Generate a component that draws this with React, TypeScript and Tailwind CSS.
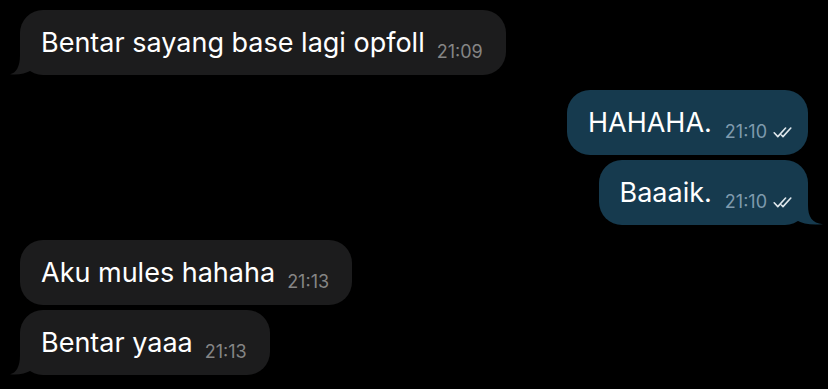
import React from "react";

const font = { fontFamily: "Inter, 'Liberation Sans', sans-serif" };

function LeftTail() {
  return (
    <svg
      className="absolute left-[-10px] bottom-0"
      width="34"
      height="30"
      viewBox="-10 -30 34 30"
    >
      <path
        d="M0 -30 L0 -20 C0 -8 -4 -2 -10 -0.8 C-3 0.2 5 -1 12 -5 L24 -5 L24 -30 Z"
        fill="#1c1c1d"
      />
    </svg>
  );
}

function RightTail() {
  return (
    <svg
      className="absolute right-[-15px] bottom-0"
      width="39"
      height="30"
      viewBox="-24 -30 39 30"
    >
      <path
        d="M0 -30 L0 -20 C0 -8 4 -2 15 -0.8 C3 0.2 -5 -1 -12 -5 L-24 -5 L-24 -30 Z"
        fill="#163a4e"
      />
    </svg>
  );
}

function Checks() {
  return (
    <svg width="20" height="11" viewBox="0 0 20 11" className="block shrink-0 w-[20px] h-[11px]">
      <path
        d="M1.2 5.8 L4.8 9.6 L12.6 1 M8.4 8 L10 9.6 L17.8 1"
        fill="none"
        stroke="#dfe7ec"
        strokeWidth="1.6"
        strokeLinecap="round"
        strokeLinejoin="round"
      />
    </svg>
  );
}

function Left({ text, time, tail }: { text: string; time: string; tail?: boolean }) {
  return (
    <div className="relative self-start flex items-end h-[65px] rounded-[23px] bg-[#1c1c1d] pl-[21px] pr-[23px] pb-[14px]">
      {tail && <LeftTail />}
      <span className="relative text-white text-[27px] leading-[33px] mb-[2px] whitespace-nowrap">{text}</span>
      <span className="relative ml-[12px] text-[#858585] text-[18px] leading-[18px] whitespace-nowrap">{time}</span>
    </div>
  );
}

function Right({ text, time, tail }: { text: string; time: string; tail?: boolean }) {
  return (
    <div className="relative self-end flex items-end h-[65px] rounded-[23px] bg-[#163a4e] pl-[21px] pr-[15px] pb-[14px]">
      {tail && <RightTail />}
      <span className="relative text-white text-[27px] leading-[33px] mb-[2px] whitespace-nowrap">{text}</span>
      <span className="relative ml-[13px] text-[#7f9aad] text-[18px] leading-[18px] whitespace-nowrap">{time}</span>
      <span className="relative ml-[6px] mb-[3px] shrink-0 flex items-end">
        <Checks />
      </span>
    </div>
  );
}

export default function App() {
  return (
    <div className="w-[828px] h-[389px] bg-black overflow-hidden" style={font}>
      <div className="flex flex-col pt-[10px] pl-[20px] pr-[20px]">
        <Left text="Bentar sayang base lagi opfoll" time="21:09" tail />
        <div className="h-[15px]" />
        <Right text="HAHAHA." time="21:10" />
        <div className="h-[5px]" />
        <Right text="Baaaik." time="21:10" tail />
        <div className="h-[15px]" />
        <Left text="Aku mules hahaha" time="21:13" />
        <div className="h-[5px]" />
        <Left text="Bentar yaaa" time="21:13" tail />
      </div>
    </div>
  );
}
